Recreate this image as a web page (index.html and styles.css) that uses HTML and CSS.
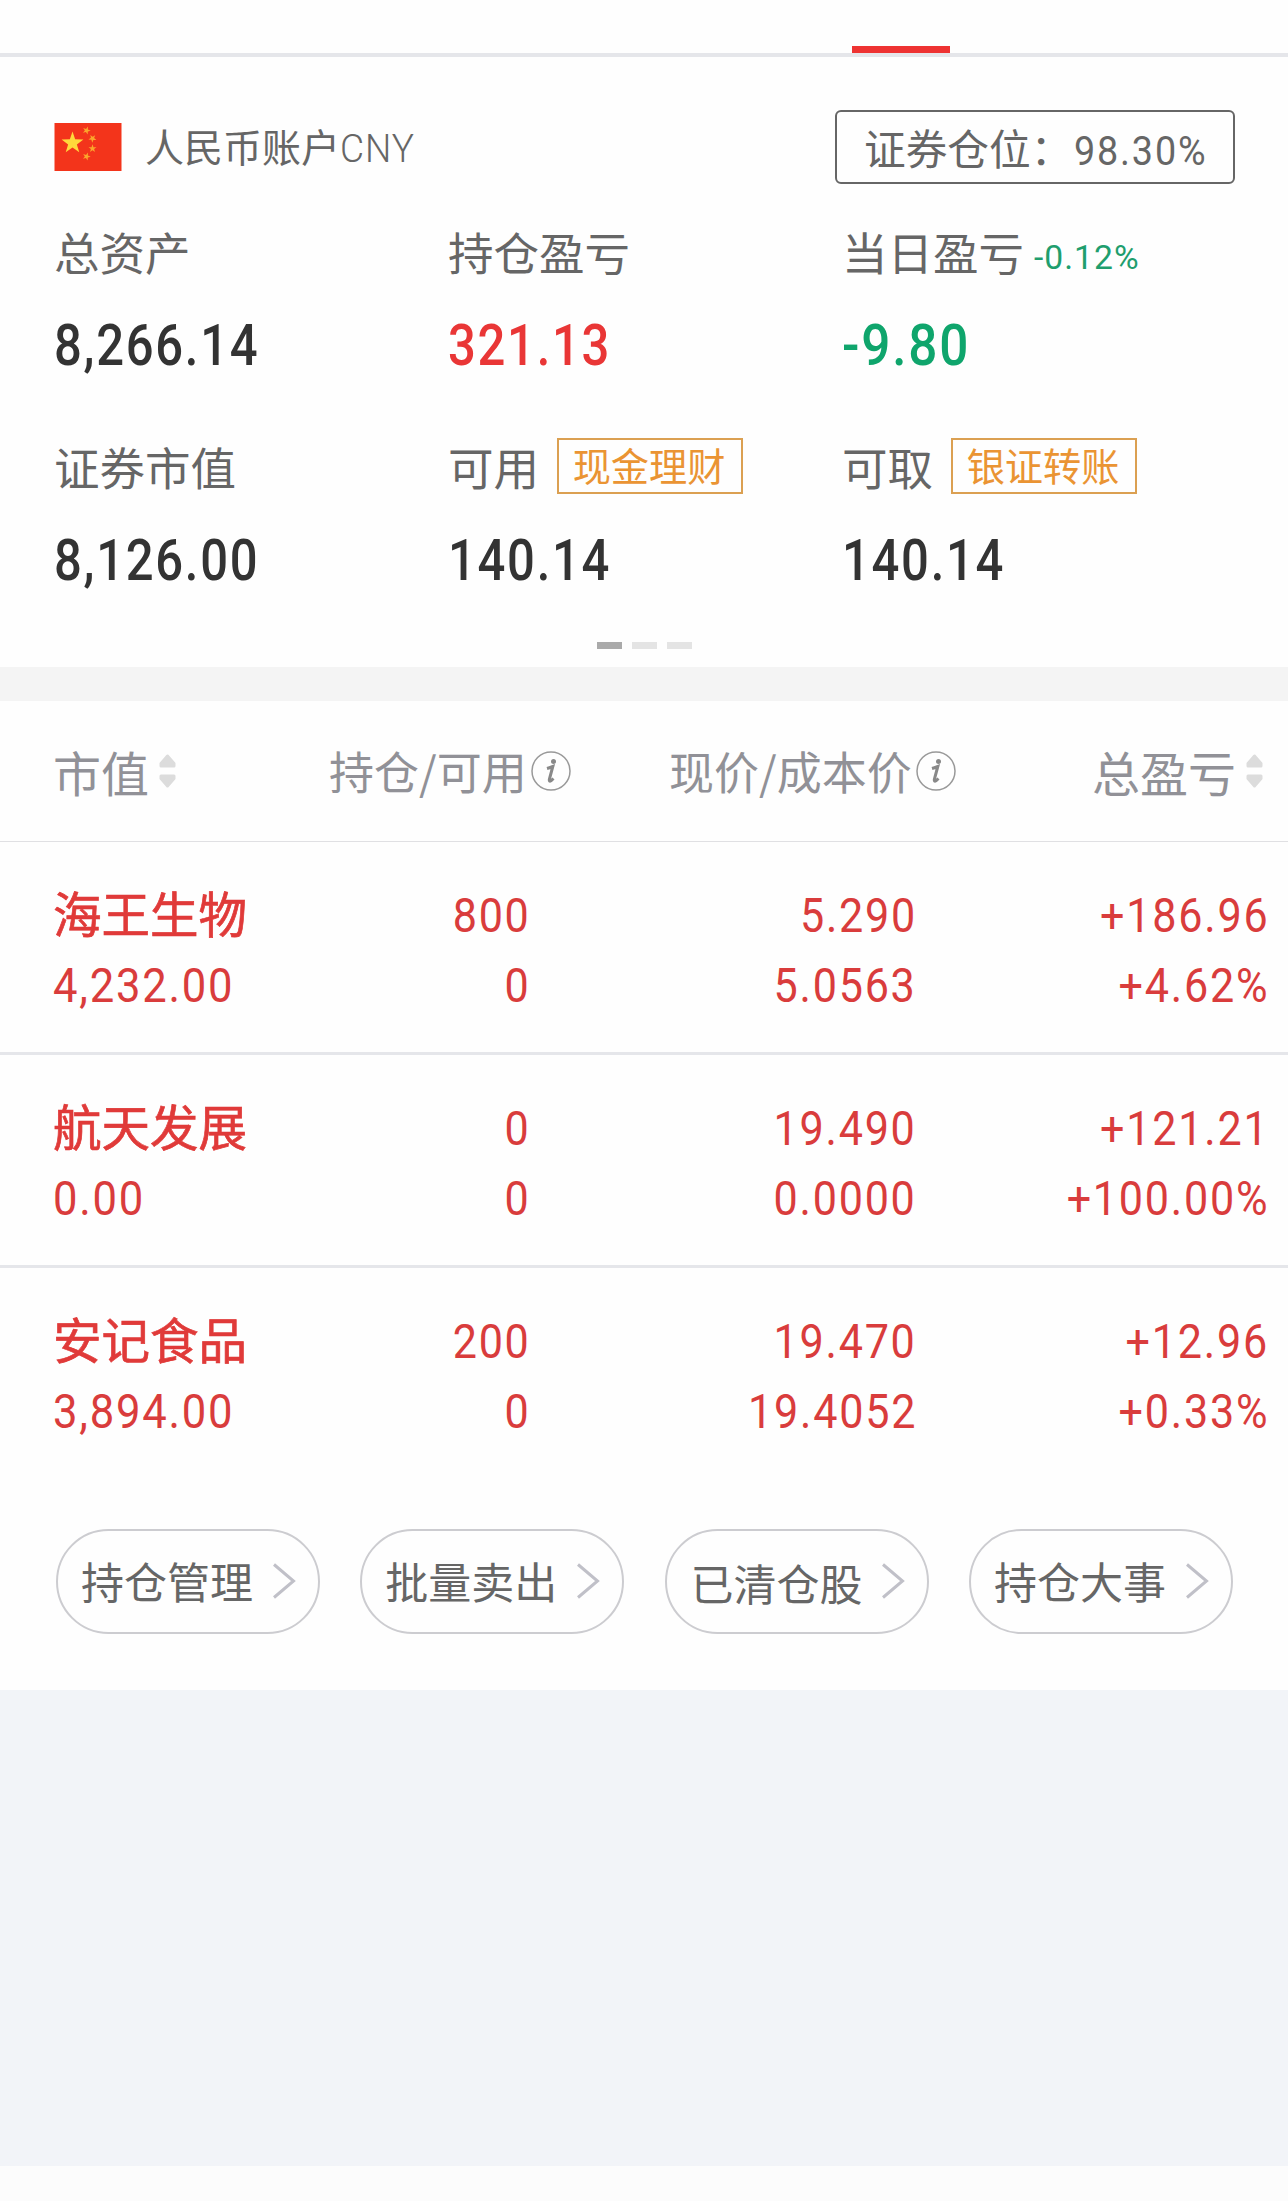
FILE: index.html
```html
<!DOCTYPE html>
<html lang="zh-CN">

<head>
    <meta charset="UTF-8">
    <meta name="viewport" content="width=device-width, initial-scale=1.0">
    <title>持仓</title>
    <link rel="stylesheet" href="styles.css">
</head>

<body>
    <!-- 顶部标签栏 -->
    <div class="tabs">
        <div class="tab-line"></div>
    </div>

    <!-- 账户资产 -->
    <div class="account">
        <div class="account-head">
            <svg class="flag" viewBox="0 0 67 48">
                <defs>
                    <polygon id="star" points="0,-10 2.3,-3.2 9.5,-3.1 3.8,1.2 5.9,8.1 0,4 -5.9,8.1 -3.8,1.2 -9.5,-3.1 -2.3,-3.2" />
                </defs>
                <rect width="67" height="48" fill="#f3341b" />
                <g fill="#ffd83b">
                    <use href="#star" transform="translate(18 20) scale(1.15)" />
                </g>
                <g fill="#fba52c">
                    <use href="#star" transform="translate(32 7.5) rotate(20) scale(.42)" />
                    <use href="#star" transform="translate(38 15.5) rotate(40) scale(.42)" />
                    <use href="#star" transform="translate(38 25.5) scale(.42)" />
                    <use href="#star" transform="translate(32 33.5) rotate(20) scale(.42)" />
                </g>
            </svg>
            <div class="account-name">人民币账户<span class="cny">CNY</span></div>
            <div class="position">证券仓位：<span class="position-num">98.30%</span></div>
        </div>

        <div class="assets">
            <div class="asset">
                <div class="label">总资产</div>
                <div class="value"><span>8,266.14</span></div>
            </div>
            <div class="asset">
                <div class="label">持仓盈亏</div>
                <div class="value up"><span>321.13</span></div>
            </div>
            <div class="asset">
                <div class="label">当日盈亏<span class="rate">-0.12%</span></div>
                <div class="value down"><span>-9.80</span></div>
            </div>
            <div class="asset">
                <div class="label">证券市值</div>
                <div class="value"><span>8,126.00</span></div>
            </div>
            <div class="asset">
                <div class="label">可用<a class="tag">现金理财</a></div>
                <div class="value"><span>140.14</span></div>
            </div>
            <div class="asset">
                <div class="label">可取<a class="tag">银证转账</a></div>
                <div class="value"><span>140.14</span></div>
            </div>
        </div>

        <div class="dots">
            <i class="active"></i><i></i><i></i>
        </div>
    </div>

    <!-- 持仓列表 -->
    <div class="holdings">
        <div class="row head">
            <div class="big">市值<svg class="sort" viewBox="0 0 17 34"><path d="M8.5 2L15 9.5V12H2V9.5Z M2 22H15V24.5L8.5 32L2 24.5Z" /></svg></div>
            <div>持仓/可用<svg class="info" viewBox="0 0 40 40"><circle cx="20" cy="20" r="19" /><circle class="fill" cx="22.5" cy="10.5" r="2.5" /><path d="M16 17.5Q19.500 16.5 21.8 15.5L18.3 28.5Q18 31 20 29.8L22.5 27.5" /></svg></div>
            <div>现价/成本价<svg class="info" viewBox="0 0 40 40"><circle cx="20" cy="20" r="19" /><circle class="fill" cx="22.5" cy="10.5" r="2.5" /><path d="M16 17.5Q19.500 16.5 21.8 15.5L18.3 28.5Q18 31 20 29.8L22.5 27.5" /></svg></div>
            <div class="big">总盈亏<svg class="sort" viewBox="0 0 17 34"><path d="M8.5 2L15 9.5V12H2V9.5Z M2 22H15V24.5L8.5 32L2 24.5Z" /></svg></div>
        </div>
        <div class="row">
            <div><b>海王生物</b><span>4,232.00</span></div>
            <div><span>800</span><span>0</span></div>
            <div><span>5.290</span><span>5.0563</span></div>
            <div><span>+186.96</span><span>+4.62%</span></div>
        </div>
        <div class="row">
            <div><b>航天发展</b><span>0.00</span></div>
            <div><span>0</span><span>0</span></div>
            <div><span>19.490</span><span>0.0000</span></div>
            <div><span>+121.21</span><span>+100.00%</span></div>
        </div>
        <div class="row">
            <div><b>安记食品</b><span>3,894.00</span></div>
            <div><span>200</span><span>0</span></div>
            <div><span>19.470</span><span>19.4052</span></div>
            <div><span>+12.96</span><span>+0.33%</span></div>
        </div>

        <!-- 快捷入口 -->
        <div class="actions">
            <button>持仓管理<svg viewBox="0 0 24 36"><path d="M2 1.5L21.5 18L2 34.5" /></svg></button>
            <button>批量卖出<svg viewBox="0 0 24 36"><path d="M2 1.5L21.5 18L2 34.5" /></svg></button>
            <button class="cleared"><span>已清仓股</span><svg viewBox="0 0 24 36"><path d="M2 1.5L21.5 18L2 34.5" /></svg></button>
            <button>持仓大事<svg viewBox="0 0 24 36"><path d="M2 1.5L21.5 18L2 34.5" /></svg></button>
        </div>
    </div>

    <div class="blank"></div>
</body>

</html>
```
FILE: styles.css
```css
* {
    box-sizing: border-box;
}

body {
    margin: 0;
    min-height: 2201px;
    background-color: #fcfcfc;
    color: #666;
    font-family: "Noto Sans CJK SC", sans-serif;
}

.tabs {
    height: 57px;
    padding-top: 46px;
    background-color: #fefefe;
    border-bottom: 4px solid #e5e6ea;
}

.tab-line {
    width: 98px;
    height: 7px;
    margin-left: 852px;
    background-color: #ee3332;
}

.account {
    height: 610px;
    padding: 53px 53px 0 54px;
    background-color: #fefefe;
}

.account-head {
    display: flex;
    align-items: center;
    height: 74px;
}

.flag {
    width: 68px;
    height: 48px;
}

.account-name {
    flex: 1;
    margin-left: 23px;
    font-size: 39px;
    line-height: 74px;
}

.cny,
.position-num,
.rate,
.value span,
.row span {
    display: inline-block;
    font-family: Roboto, sans-serif;
    transform: scaleX(.88);
    transform-origin: left center;
}

.cny {
    font-weight: 300;
    letter-spacing: 1px;
    transform: scaleX(.95);
}

.position {
    width: 400px;
    height: 74px;
    padding-left: 27px;
    border: 2px solid #666;
    border-radius: 6px;
    font-size: 41.7px;
    line-height: 70px;
    white-space: nowrap;
}

.position-num {
    margin-left: 2px;
    font-size: 41px;
    letter-spacing: 2px;
    transform: scaleX(.92);
}

.assets {
    display: grid;
    grid-template-columns: repeat(3, 394px);
    row-gap: 62px;
    padding-top: 37px;
}

.label {
    display: flex;
    align-items: center;
    height: 60px;
    font-size: 45.5px;
    line-height: 60px;
}

.rate {
    margin: 12px 0 0 10px;
    font-size: 34px;
    letter-spacing: 1px;
    color: #1f9e6e;
    transform: scaleX(.99);
}

.value {
    margin-top: 29px;
    margin-bottom: 4px;
    height: 60px;
    color: #333;
    font-size: 58px;
    font-weight: 500;
    line-height: 60px;
    letter-spacing: 2px;
}

.value span {
    transform: scaleX(.845);
}

.up {
    color: #e93636;
}

.down {
    color: #0fa56c;
}

.value.down span {
    transform: scaleX(.885);
}

.tag {
    width: 186px;
    height: 56px;
    margin-left: 18px;
    padding-right: 2px;
    border: 2px solid #dba052;
    color: #ea9433;
    font-size: 38.2px;
    line-height: 50px;
    text-align: center;
}

.dots {
    display: flex;
    justify-content: center;
    gap: 10px;
    margin-top: 53px;
}

.dots i {
    width: 25px;
    height: 7px;
    background-color: #e4e4e4;
}

.dots .active {
    background-color: #aaa;
}

.holdings {
    height: 1023px;
    border-top: 34px solid #f4f4f4;
    background-color: #fefefe;
}

.row {
    display: grid;
    grid-template-columns: 278px 200px 386px 352px;
    height: 213px;
    padding: 39px 0 0 53px;
    border-bottom: 3px solid #e5e6ea;
    color: #d93c3c;
    font-size: 49px;
    line-height: 70px;
}

.row:nth-child(4) {
    border-bottom: none;
}

.row > div {
    display: flex;
    flex-direction: column;
    align-items: flex-end;
}

.row > div:first-child {
    align-items: flex-start;
}

.row b {
    margin: -4px 0 4px;
    font-size: 48.5px;
    font-weight: 400;
    color: #e03a39;
    -webkit-text-stroke: .7px #e03a39;
}

.row span {
    letter-spacing: 2px;
    transform-origin: right center;
}

.row > div:first-child span {
    transform-origin: left center;
    transform: scaleX(.89);
}

/* 表头 */
.row.head {
    grid-template-columns: 276px 340px 423px 176px;
    height: 141px;
    padding-top: 0;
    border-bottom: 1px solid #e0e0e3;
    color: #919197;
    font-size: 45px;
    line-height: 140px;
}

.row.head > div {
    flex-direction: row;
    align-items: center;
    white-space: nowrap;
}

.row.head .big {
    font-size: 48px;
}

.sort {
    width: 17px;
    height: 34px;
    margin-left: 10px;
    fill: #dcdcdc;
    stroke: #dcdcdc;
    stroke-width: 3;
    stroke-linejoin: round;
}

.info {
    width: 40px;
    height: 40px;
    margin-left: 4px;
    fill: none;
    stroke: #999;
    stroke-width: 1.5;
}

.info path {
    stroke-width: 3;
    stroke: #888;
}

.info .fill {
    fill: #888;
    stroke: none;
}

/* 底部按钮 */
.actions {
    display: flex;
    gap: 40.3px;
    padding: 48px 55px 0 56px;
}

.actions button {
    display: flex;
    align-items: center;
    width: 264px;
    height: 105px;
    padding: 0 0 4px 23px;
    border: 2px solid #ccccd0;
    border-radius: 53px;
    background-color: #fefefe;
    color: #666;
    font-family: inherit;
    font-size: 43px;
    line-height: 96px;
    white-space: nowrap;
}

.actions svg {
    width: 24px;
    height: 36px;
    margin: 3px 0 0 19px;
    fill: none;
    stroke: #c0c0c8;
    stroke-width: 3;
}

.cleared span {
    padding: 4px 0 0 1px;
}

.cleared svg {
    margin-left: 18px;
}

.blank {
    height: 476px;
    background-color: #f2f4f8;
}
```
